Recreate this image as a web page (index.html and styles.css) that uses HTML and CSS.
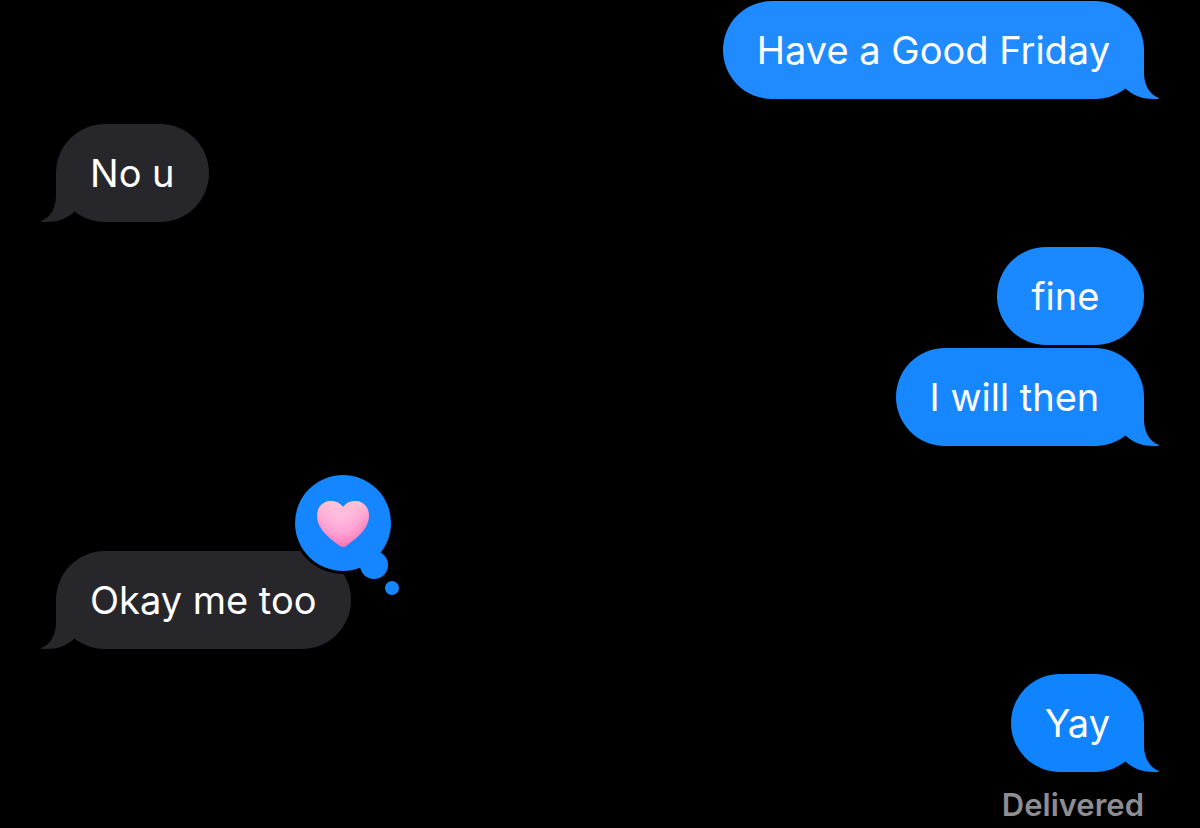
FILE: index.html
```html
<!DOCTYPE html>
<html lang="en">
<head>
    <meta charset="UTF-8">
    <meta name="viewport" content="width=device-width, initial-scale=1.0">
    <title>Messages</title>
    <link rel="stylesheet" href="styles.css">
</head>
<body>
    <!-- Shared bubble tail -->
    <svg class="defs" width="0" height="0" aria-hidden="true">
        <symbol id="tail" viewBox="0 0 36 50">
            <path d="M0 0H20V24C20 36 26 46 35 49C35 50 33 50 30 50C19 50 9 47 1 39L0 38Z"/>
        </symbol>
    </svg>

    <!-- Conversation -->
    <main class="chat">
        <div class="group sent">
            <p class="bubble blue-1">Have a Good Friday<svg class="tail" aria-hidden="true"><use href="#tail"/></svg></p>
        </div>

        <div class="group received">
            <p class="bubble">No u<svg class="tail" aria-hidden="true"><use href="#tail"/></svg></p>
        </div>

        <div class="group sent">
            <p class="bubble blue-2">fine&nbsp;</p>
            <p class="bubble blue-3">I will then&nbsp;<svg class="tail" aria-hidden="true"><use href="#tail"/></svg></p>
        </div>

        <div class="group received has-reaction">
            <p class="bubble">Okay me too<svg class="tail" aria-hidden="true"><use href="#tail"/></svg>
                <!-- Heart reaction -->
                <svg class="reaction" viewBox="0 0 108 126" role="img" aria-label="Heart">
                    <defs>
                        <radialGradient id="heartFill" cx="0.45" cy="0.35" r="0.65">
                            <stop offset="0" stop-color="#ffb9df"/>
                            <stop offset="0.5" stop-color="#ffa6d6"/>
                            <stop offset="1" stop-color="#fc74b6"/>
                        </radialGradient>
                        <linearGradient id="heartShine" x1="0" y1="0" x2="0" y2="1">
                            <stop offset="0" stop-color="#ffc9d6" stop-opacity="0.9"/>
                            <stop offset="0.5" stop-color="#ffc9dc" stop-opacity="0"/>
                        </linearGradient>
                        <path id="heart" d="M51 35C48 31 44 29 39 29C31 29 25 35 25 44C25 55 34 64 48 74Q51 76 54 74C68 64 77 55 77 44C77 35 71 29 63 29C58 29 54 31 51 35Z"/>
                    </defs>
                    <circle class="ring" cx="51" cy="51" r="51"/>
                    <circle class="cloud" cx="51" cy="51" r="48"/>
                    <circle class="cloud" cx="82" cy="93" r="14"/>
                    <circle class="cloud" cx="100" cy="116" r="7"/>
                    <use href="#heart" fill="url(#heartFill)"/>
                    <use href="#heart" fill="url(#heartShine)"/>
                </svg>
            </p>
        </div>

        <div class="group sent">
            <p class="bubble blue-4">Yay<svg class="tail" aria-hidden="true"><use href="#tail"/></svg></p>
            <p class="status">Delivered</p>
        </div>
    </main>
</body>
</html>
```
FILE: styles.css
```css
/* Global Styles */
body {
    margin: 0;
    background-color: #000;
    color: white;
    font-family: Inter, "Liberation Sans", sans-serif;
}

.defs {
    position: absolute;
}

.chat {
    display: flex;
    flex-direction: column;
    gap: 25px;
    padding: 1px 56px 0;
}

/* Message groups */
.group {
    display: flex;
    flex-direction: column;
    gap: 3px;
}

.sent {
    align-items: flex-end;
}

.received {
    align-items: flex-start;
}

.has-reaction {
    padding-top: 80px;
}

/* Bubbles */
.bubble {
    position: relative;
    margin: 0;
    padding: 25px 34px;
    border-radius: 49px;
    background-color: var(--fill);
    font-size: 38px;
    line-height: 48px;
}

.received .bubble {
    --fill: #27262b;
}

.blue-1 {
    --fill: #208bff;
}

.blue-2 {
    --fill: #1a88ff;
}

.blue-3 {
    --fill: #1787ff;
}

.blue-4 {
    --fill: #1084ff;
}

.tail {
    position: absolute;
    right: -16px;
    bottom: 0;
    width: 36px;
    height: 50px;
    fill: var(--fill);
}

.received .tail {
    right: auto;
    left: -16px;
    transform: scaleX(-1);
}

/* Reaction */
.reaction {
    position: absolute;
    top: -79px;
    right: -49px;
    width: 108px;
    height: 126px;
}

.ring {
    fill: #000;
}

.cloud {
    fill: #1586ff;
}

/* Delivery status */
.status {
    margin: 0;
    padding-top: 12px;
    color: #8d8d93;
    font-size: 31px;
    font-weight: 600;
    line-height: 36px;
}
```
